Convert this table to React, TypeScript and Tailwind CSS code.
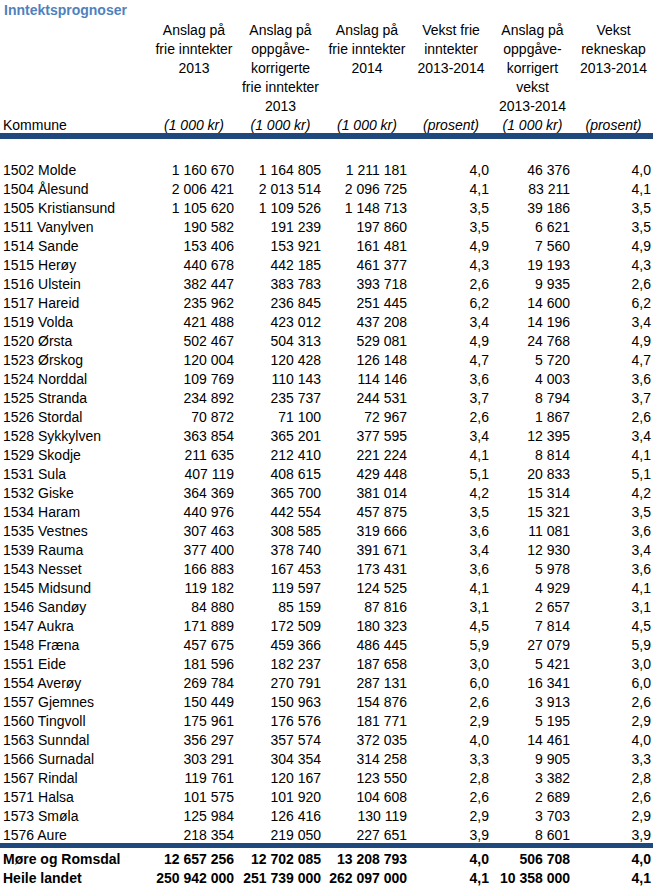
type Row = [string, string, string, string, string, string, string];

const rows: Row[] = [
  ['1502 Molde', '1 160 670', '1 164 805', '1 211 181', '4,0', '46 376', '4,0'],
  ['1504 Ålesund', '2 006 421', '2 013 514', '2 096 725', '4,1', '83 211', '4,1'],
  ['1505 Kristiansund', '1 105 620', '1 109 526', '1 148 713', '3,5', '39 186', '3,5'],
  ['1511 Vanylven', '190 582', '191 239', '197 860', '3,5', '6 621', '3,5'],
  ['1514 Sande', '153 406', '153 921', '161 481', '4,9', '7 560', '4,9'],
  ['1515 Herøy', '440 678', '442 185', '461 377', '4,3', '19 193', '4,3'],
  ['1516 Ulstein', '382 447', '383 783', '393 718', '2,6', '9 935', '2,6'],
  ['1517 Hareid', '235 962', '236 845', '251 445', '6,2', '14 600', '6,2'],
  ['1519 Volda', '421 488', '423 012', '437 208', '3,4', '14 196', '3,4'],
  ['1520 Ørsta', '502 467', '504 313', '529 081', '4,9', '24 768', '4,9'],
  ['1523 Ørskog', '120 004', '120 428', '126 148', '4,7', '5 720', '4,7'],
  ['1524 Norddal', '109 769', '110 143', '114 146', '3,6', '4 003', '3,6'],
  ['1525 Stranda', '234 892', '235 737', '244 531', '3,7', '8 794', '3,7'],
  ['1526 Stordal', '70 872', '71 100', '72 967', '2,6', '1 867', '2,6'],
  ['1528 Sykkylven', '363 854', '365 201', '377 595', '3,4', '12 395', '3,4'],
  ['1529 Skodje', '211 635', '212 410', '221 224', '4,1', '8 814', '4,1'],
  ['1531 Sula', '407 119', '408 615', '429 448', '5,1', '20 833', '5,1'],
  ['1532 Giske', '364 369', '365 700', '381 014', '4,2', '15 314', '4,2'],
  ['1534 Haram', '440 976', '442 554', '457 875', '3,5', '15 321', '3,5'],
  ['1535 Vestnes', '307 463', '308 585', '319 666', '3,6', '11 081', '3,6'],
  ['1539 Rauma', '377 400', '378 740', '391 671', '3,4', '12 930', '3,4'],
  ['1543 Nesset', '166 883', '167 453', '173 431', '3,6', '5 978', '3,6'],
  ['1545 Midsund', '119 182', '119 597', '124 525', '4,1', '4 929', '4,1'],
  ['1546 Sandøy', '84 880', '85 159', '87 816', '3,1', '2 657', '3,1'],
  ['1547 Aukra', '171 889', '172 509', '180 323', '4,5', '7 814', '4,5'],
  ['1548 Fræna', '457 675', '459 366', '486 445', '5,9', '27 079', '5,9'],
  ['1551 Eide', '181 596', '182 237', '187 658', '3,0', '5 421', '3,0'],
  ['1554 Averøy', '269 784', '270 791', '287 131', '6,0', '16 341', '6,0'],
  ['1557 Gjemnes', '150 449', '150 963', '154 876', '2,6', '3 913', '2,6'],
  ['1560 Tingvoll', '175 961', '176 576', '181 771', '2,9', '5 195', '2,9'],
  ['1563 Sunndal', '356 297', '357 574', '372 035', '4,0', '14 461', '4,0'],
  ['1566 Surnadal', '303 291', '304 354', '314 258', '3,3', '9 905', '3,3'],
  ['1567 Rindal', '119 761', '120 167', '123 550', '2,8', '3 382', '2,8'],
  ['1571 Halsa', '101 575', '101 920', '104 608', '2,6', '2 689', '2,6'],
  ['1573 Smøla', '125 984', '126 416', '130 119', '2,9', '3 703', '2,9'],
  ['1576 Aure', '218 354', '219 050', '227 651', '3,9', '8 601', '3,9'],
];

const totals: Row[] = [
  ['Møre og Romsdal', '12 657 256', '12 702 085', '13 208 793', '4,0', '506 708', '4,0'],
  ['Heile landet', '250 942 000', '251 739 000', '262 097 000', '4,1', '10 358 000', '4,1'],
];

const headers: string[][] = [
  ['Anslag på', 'frie inntekter', '2013'],
  ['Anslag på', 'oppgåve-', 'korrigerte', 'frie inntekter', '2013'],
  ['Anslag på', 'frie inntekter', '2014'],
  ['Vekst frie', 'inntekter', '2013-2014'],
  ['Anslag på', 'oppgåve-', 'korrigert', 'vekst', '2013-2014'],
  ['Vekst', 'rekneskap', '2013-2014'],
];

const units = ['(1 000 kr)', '(1 000 kr)', '(1 000 kr)', '(prosent)', '(1 000 kr)', '(prosent)'];

const grid = 'grid grid-cols-[151px_86px_87px_86px_82px_81px_81px]';

function DataRow({ row, bold }: { row: Row; bold?: boolean }) {
  return (
    <div className={`${grid} h-[19px] pt-[2px] ${bold ? 'font-bold' : ''}`}>
      <div className="whitespace-nowrap pl-[3px]">{row[0]}</div>
      {row.slice(1).map((v, i) => (
        <div key={i} className="whitespace-nowrap pr-[3px] text-right">
          {v}
        </div>
      ))}
    </div>
  );
}

export default function App() {
  return (
    <div className="h-[888px] w-[656px] overflow-hidden bg-white font-['Liberation_Sans',Arial,sans-serif] text-[14px] leading-[19px] text-black">
      <div className="h-[19px] pt-[1px] pl-[4px] font-bold text-[#4f81bd]">Inntektsprognoser</div>

      <div className={`${grid} h-[95px] pt-[2px]`}>
        <div />
        {headers.map((lines, i) => (
          <div key={i} className="flex flex-col items-center text-center">
            {lines.map((l) => (
              <span key={l} className="whitespace-nowrap">
                {l}
              </span>
            ))}
          </div>
        ))}
      </div>

      <div className={`${grid} h-[19px] pt-[2px]`}>
        <div className="pl-[3px]">Kommune</div>
        {units.map((u, i) => (
          <div key={i} className="whitespace-nowrap text-center italic">
            {u}
          </div>
        ))}
      </div>

      <div className="h-[6px] w-[653px] bg-[#1f497d]" />
      <div className="h-[20px]" />

      {rows.map((r) => (
        <DataRow key={r[0]} row={r} />
      ))}

      <div className="h-[5px] w-[653px] bg-[#1f497d]" />

      {totals.map((r) => (
        <DataRow key={r[0]} row={r} bold />
      ))}
    </div>
  );
}
